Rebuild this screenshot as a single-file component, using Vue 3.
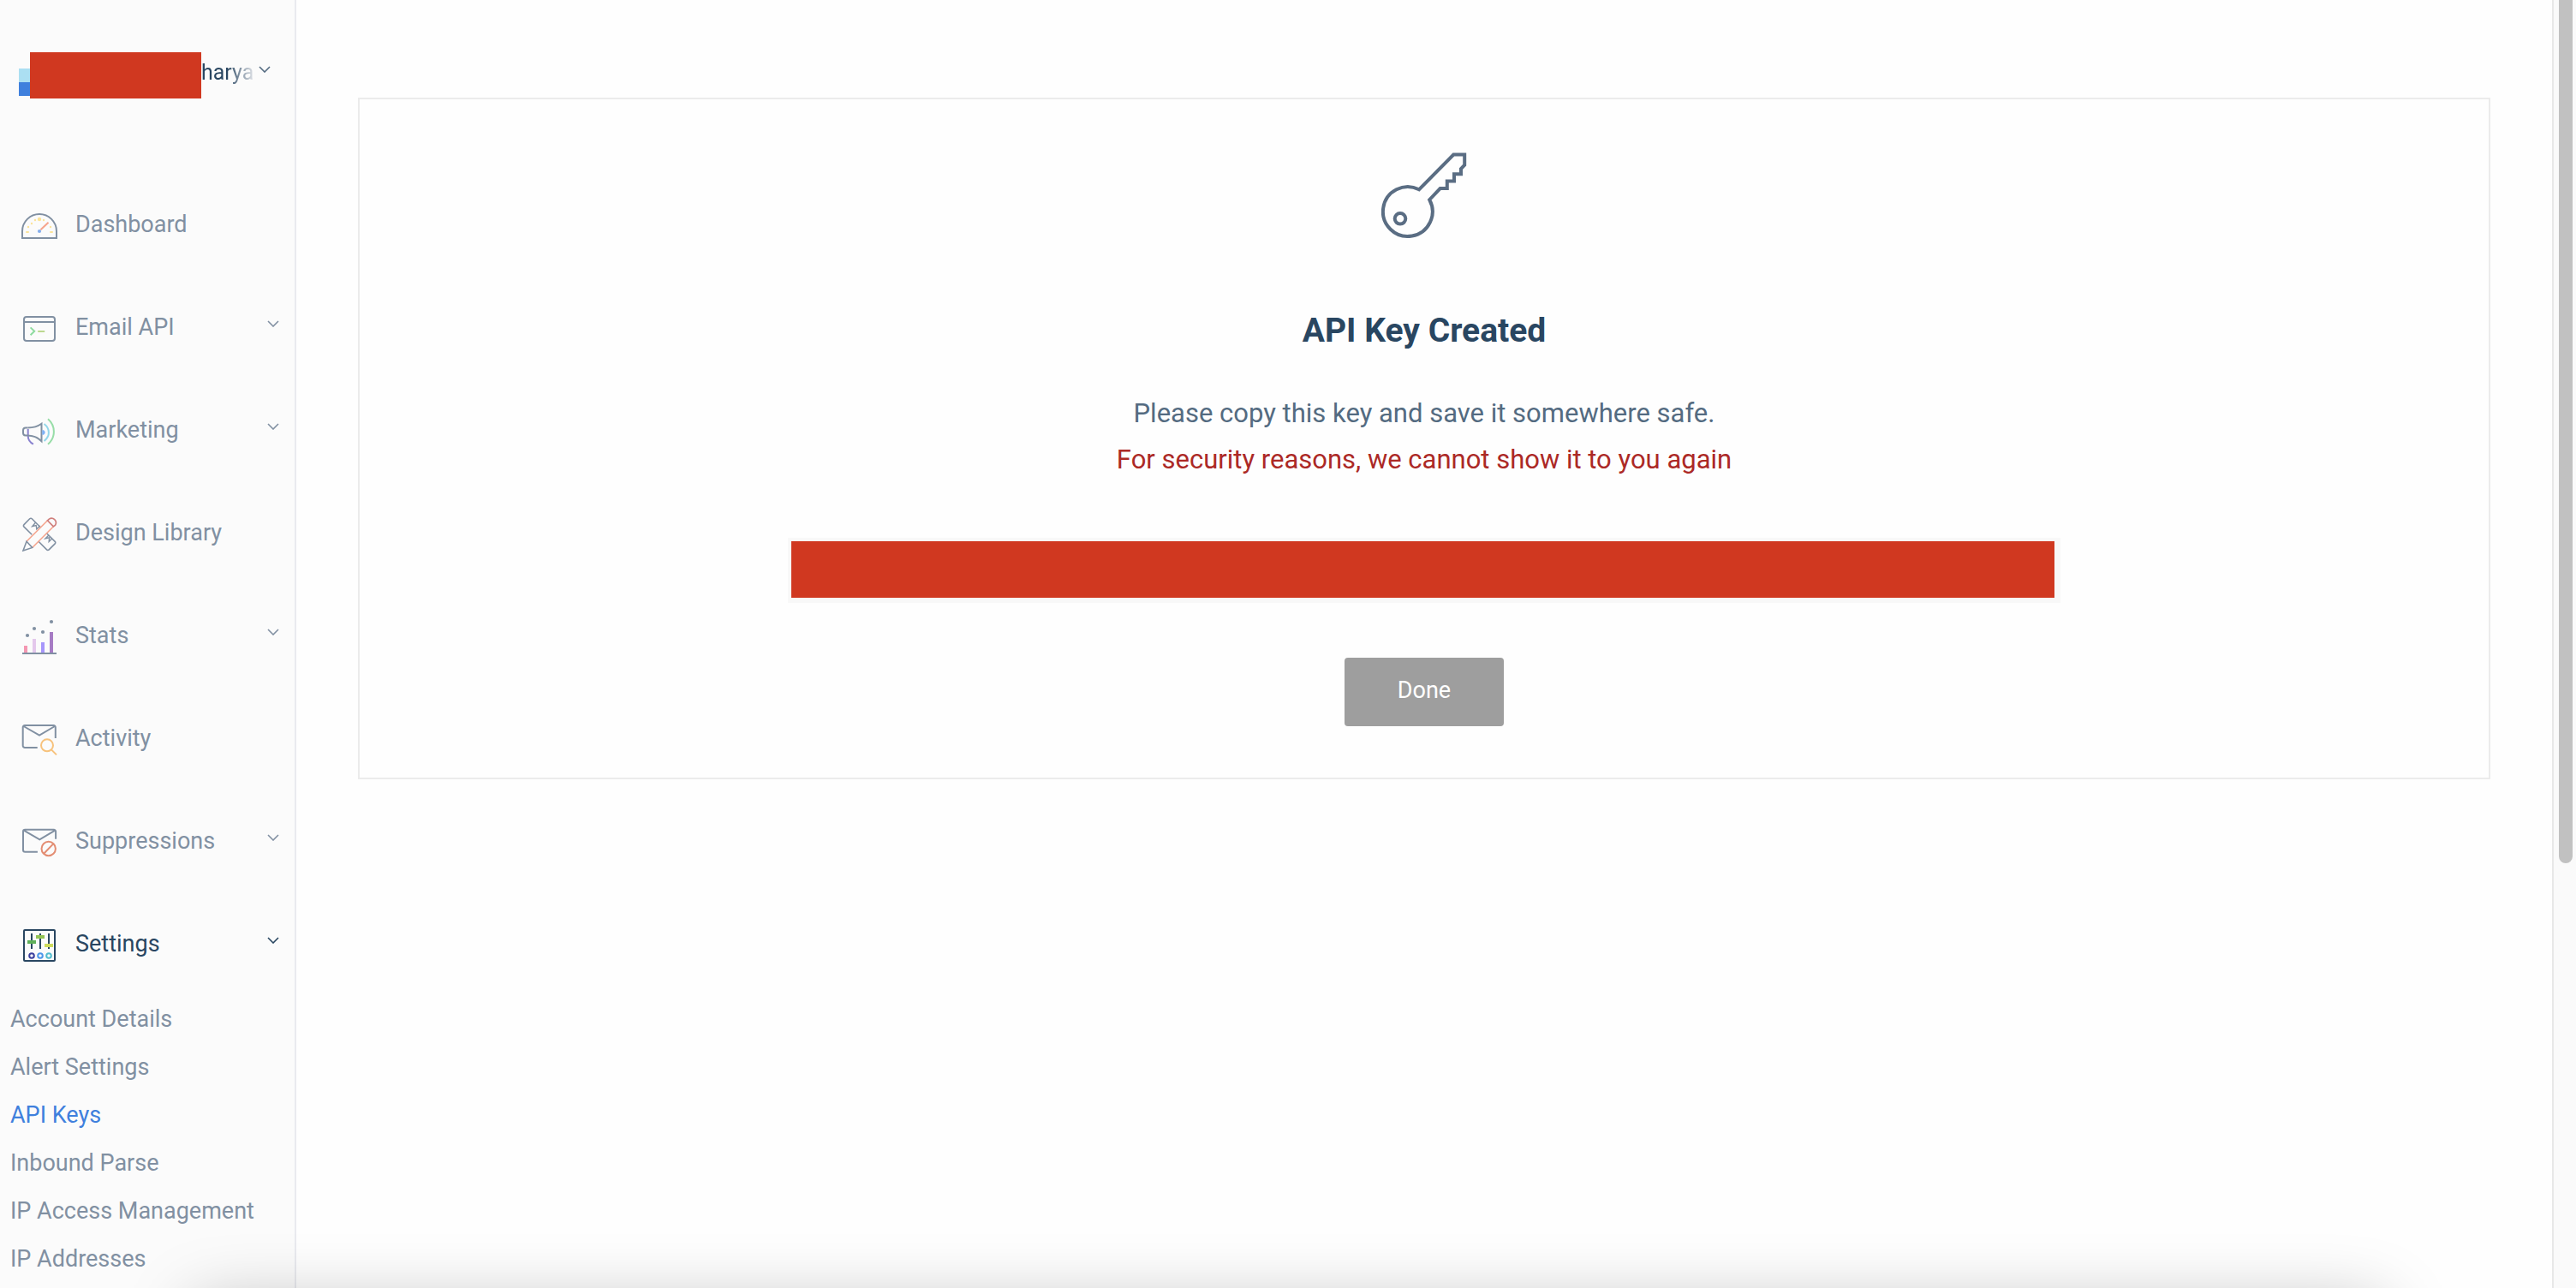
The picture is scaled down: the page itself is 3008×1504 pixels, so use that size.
<script setup>
import { ref } from 'vue'

const items = [
  { label: 'Dashboard', icon: 'dashboard' },
  { label: 'Email API', icon: 'email', expandable: true },
  { label: 'Marketing', icon: 'marketing', expandable: true },
  { label: 'Design Library', icon: 'design' },
  { label: 'Stats', icon: 'stats', expandable: true },
  { label: 'Activity', icon: 'activity' },
  { label: 'Suppressions', icon: 'suppressions', expandable: true },
  { label: 'Settings', icon: 'settings', expandable: true }
]

const settingsLinks = [
  'Account Details',
  'Alert Settings',
  'API Keys',
  'Inbound Parse',
  'IP Access Management',
  'IP Addresses'
]

const activeItem = ref('Settings')
const activeLink = ref('API Keys')
</script>

<template>
  <div class="page">
    <aside class="sidebar">
      <button class="account" type="button">
        <span class="logo" aria-hidden="true"></span>
        <span class="redacted name-cover"></span>
        <span class="account-name">harya</span>
        <svg class="chevron" viewBox="0 0 14 8" aria-hidden="true"><path d="M1 1l6 6 6-6" /></svg>
      </button>

      <nav>
        <a
          v-for="item in items"
          :key="item.label"
          href="#"
          class="item"
          :class="{ active: item.label === activeItem }"
          @click.prevent="activeItem = item.label"
        >
          <svg class="icon" viewBox="0 0 44 44" aria-hidden="true">
            <template v-if="item.icon === 'dashboard'">
              <path d="M2 38v-8a20 20 0 0 1 40 0v8z" />
              <g fill="#fbe49a" stroke="none">
                <rect x="6" y="30" width="4" height="2" rx="1" />
                <circle cx="9" cy="25" r="1.2" />
                <circle cx="13" cy="21" r="1.2" />
                <circle cx="17" cy="17" r="1.2" />
                <circle cx="22" cy="16" r="2.2" />
                <circle cx="27" cy="17" r="1.2" />
                <circle cx="35" cy="25" r="1.2" />
                <rect x="34" y="30" width="4" height="2" rx="1" />
              </g>
              <path d="M23.5 28.3l9-8.6" stroke="#f6a48c" />
              <circle cx="22" cy="30" r="2.1" fill="#85aeec" stroke="none" />
            </template>
            <template v-else-if="item.icon === 'email'">
              <rect x="4" y="10" width="36" height="28" rx="3" />
              <path d="M4 16h36" />
              <path d="M11.6 22.4l4.6 4.4-4.6 4.4" stroke="#8fdba0" />
              <path d="M20.2 27h8" stroke="#bcd88f" />
            </template>
            <template v-else-if="item.icon === 'marketing'">
              <path d="M8.7 21v8c0 4 2.4 7.6 6.2 9.7" stroke="#8a83cf" />
              <path d="M8.5 19.5H6a3 3 0 0 0-3 3v3a3 3 0 0 0 3 3h2.5" />
              <path d="M8.5 19.5c6.5 0 11.5-1.5 16-4.7v20.4c-4.5-4.4-9.5-6.7-16-6.7" />
              <path d="M25.8 22.6a2.4 2.4 0 0 1 0 4.8z" fill="#7fb2f5" stroke="#7fb2f5" stroke-width="1" />
              <path d="M27.5 15c7.2 5.5 7.2 14.500 0 20" stroke="#93d7ea" />
              <path d="M32 9.2c9.2 8 9.2 21.6 0 29.6" stroke="#98dda8" />
            </template>
            <template v-else-if="item.icon === 'design'">
              <path d="M23 15.5L13.3 5.8a1.8 1.8 0 0 0-2.6 0L4 12.6a1.8 1.8 0 0 0 0 2.6l9.2 9.1M20.8 32l9.8 9.9a1.8 1.8 0 0 0 2.6 0l7-7a1.8 1.8 0 0 0 0-2.6L30.3 22.5" stroke-width="1.6" />
              <path d="M17.5 10.3l-3.7 4.2 4.4-1 .6 4.3 4-3.7M33 25l-4 3.8 4.6-1-.4 4.6 3.7-3.7" stroke-width="1.4" />
              <path d="M7 32.3L31.5 7.8M13.7 39.5l24.7-24.7" stroke="#f5a58e" stroke-width="1.6" />
              <path d="M31.5 7.8l1.8-1.7a5.2 5.2 0 0 1 7.3 7l-2.2 1.7z" stroke="#d07f7c" stroke-width="1.7" />
              <path d="M7 32.3L3 43l10.7-3.5z" stroke-width="1.6" />
            </template>
            <template v-else-if="item.icon === 'stats'">
              <g stroke="none">
                <rect x="4" y="34" width="4" height="8" fill="#f497b2" />
                <rect x="14" y="26" width="4" height="16" fill="#e4c8ec" />
                <rect x="24" y="30" width="4" height="12" fill="#a796fb" />
                <rect x="34" y="18" width="4" height="24" fill="#a67bc4" />
                <g fill="currentColor">
                  <rect x="2" y="42" width="40" height="2" />
                  <circle cx="8" cy="22" r="2.1" />
                  <circle cx="16" cy="14" r="2.1" />
                  <circle cx="26" cy="18" r="2.1" />
                  <circle cx="36" cy="6" r="2.1" />
                </g>
              </g>
            </template>
            <template v-else-if="item.icon === 'activity'">
              <path d="M19.7 33H5a2.3 2.3 0 0 1-2.3-2.3V9.3A2.3 2.3 0 0 1 5 7h33.500a2.300 2.300 0 0 1 2.3 2.3V22M3.5 8L22 18.6 40 8" />
              <circle cx="31" cy="30.3" r="7" stroke="#f7c27c" />
              <path d="M36.2 35.6l5.8 5.8" stroke="#f7c27c" />
            </template>
            <template v-else-if="item.icon === 'suppressions'">
              <path d="M19.9 34.7H5.3A2.3 2.3 0 0 1 3 32.4V11a2.3 2.3 0 0 1 2.3-2.3h33.500A2.3 2.3 0 0 1 41.1 11v8.7M3.8 9.7L22.3 20.3l18-10.6" />
              <circle cx="32.7" cy="31" r="8.2" stroke="#e38d72" />
              <path d="M27.2 36.8l11-11.4" stroke="#e38d72" />
            </template>
            <template v-else>
              <rect x="4" y="6" width="36" height="36" rx="1" />
              <path d="M13 10v18M23 10v18M33 10v18" />
              <g stroke="none">
                <rect x="8" y="18" width="10" height="4" fill="#5fb059" />
                <rect x="18" y="12" width="10" height="4" fill="#92c353" />
                <rect x="28" y="22" width="10" height="4" fill="#cddb5c" />
              </g>
              <circle cx="13" cy="36" r="2.8" stroke="#3c3f9e" />
              <circle cx="23" cy="36" r="2.8" stroke="#4d97ea" />
              <circle cx="33" cy="36" r="2.8" stroke="#52bdcf" />
            </template>
          </svg>
          <span class="label">{{ item.label }}</span>
          <svg v-if="item.expandable" class="chevron" viewBox="0 0 14 8" aria-hidden="true"><path d="M1 1l6 6 6-6" /></svg>
        </a>
        <a
          v-for="link in settingsLinks"
          :key="link"
          href="#"
          class="sublink"
          :class="{ current: link === activeLink }"
          @click.prevent="activeLink = link"
        >{{ link }}</a>
      </nav>
    </aside>

    <main class="content">
      <section class="card">
        <svg class="key" viewBox="0 0 100 100" aria-hidden="true">
          <path d="M44 43.3L84.3 2.500H97.2V14.7L93 19v6.300H85v8.2H76.8v8.5H68.7L56.2 55.2A28.9 28.9 0 1 1 44 43.3z" />
          <circle cx="22" cy="77.3" r="6.3" />
        </svg>
        <h1>API Key Created</h1>
        <p>Please copy this key and save it somewhere safe.</p>
        <p class="warning">For security reasons, we cannot show it to you again</p>
        <div class="key-field"><span class="redacted key-cover"></span></div>
        <button class="done" type="button">Done</button>
      </section>
    </main>

    <div class="scroll-track" aria-hidden="true"><div class="scroll-thumb"></div></div>
    <div class="window-shadow" aria-hidden="true"></div>
  </div>
</template>

<style>
body {
  margin: 0;
}
</style>

<style scoped>
.page {
  position: relative;
  display: flex;
  height: 100vh;
  overflow: hidden;
  background: #fefefe;
  color: #546b81;
  font-family: Roboto, "Liberation Sans", sans-serif;
}

.sidebar {
  box-sizing: border-box;
  flex: 0 0 346px;
  border-right: 2px solid #e9eaef;
  background: #fbfbfb;
}

.account {
  display: flex;
  align-items: flex-start;
  width: 100%;
  height: 202px;
  padding: 61px 28px 0 22px;
  border: 0;
  background: none;
  color: #546b81;
  font-family: inherit;
  font-size: 25px;
  line-height: 48px;
  text-align: left;
}

.logo {
  width: 13px;
  height: 32px;
  margin-top: 19px;
  background: linear-gradient(#abdff2 50%, #3f80dd 50%);
}

.redacted {
  background: #d03820;
}

.name-cover {
  width: 200px;
  height: 54px;
}

.account-name {
  flex: 1;
  background: linear-gradient(90deg, #294661 30px, #d8dce2 60px);
  background-clip: text;
  color: transparent;
}

.account .chevron {
  margin-top: 16px;
}

.item {
  display: flex;
  align-items: center;
  height: 120px;
  padding: 0 18px 0 24px;
  color: #8190a2;
  font-size: 27px;
  text-decoration: none;
}

.item.active {
  color: #294661;
}

.icon {
  width: 44px;
  height: 44px;
  margin-right: 20px;
  fill: none;
  stroke: currentColor;
  stroke-width: 2;
}

.label {
  flex: 1;
}

.chevron {
  flex: none;
  width: 14px;
  height: 8px;
  fill: none;
  stroke: currentColor;
  stroke-width: 1.6;
}

.item .chevron {
  margin-bottom: 8px;
}

.sublink {
  display: block;
  padding-left: 12px;
  color: #8190a2;
  font-size: 27px;
  line-height: 56px;
  text-decoration: none;
}

.sublink.current {
  color: #3f80dd;
}

.content {
  flex: 1;
  padding: 114px 72px 0;
}

.card {
  display: flex;
  flex-direction: column;
  align-items: center;
  padding: 62px 0 60px;
  border: 2px solid #ebebeb;
}

.key {
  width: 100px;
  height: 100px;
  fill: none;
  stroke: #5a6d83;
  stroke-width: 4;
}

h1 {
  margin: 82px 0 44px;
  color: #294661;
  font-size: 39px;
  font-weight: 700;
  line-height: 52px;
}

p {
  margin: 0;
  font-size: 31px;
  line-height: 54px;
}

.warning {
  color: #ac2926;
}

.key-field {
  box-sizing: border-box;
  display: flex;
  width: 1486px;
  max-width: 100%;
  height: 76px;
  margin: 64px 0;
  padding: 4px 7px 6px 4px;
  background: #f8f8f8;
}

.key-cover {
  flex: 1;
}

.done {
  width: 186px;
  height: 80px;
  padding: 0 0 4px;
  border: 0;
  border-radius: 4px;
  background: #9e9e9e;
  color: #fff;
  font-family: inherit;
  font-size: 27px;
}

.scroll-track {
  box-sizing: border-box;
  flex: 0 0 28px;
  padding: 0 4px 0 6px;
  border-left: 2px solid #e8e8e8;
  background: #fafafa;
}

.scroll-thumb {
  height: 67%;
  border-radius: 0 0 8px 8px;
  background: #c1c1c1;
}

.window-shadow {
  position: absolute;
  right: 226px;
  bottom: -220px;
  left: 226px;
  height: 200px;
  box-shadow: 0 0 80px rgba(0, 0, 0, 0.27);
  pointer-events: none;
}
</style>
